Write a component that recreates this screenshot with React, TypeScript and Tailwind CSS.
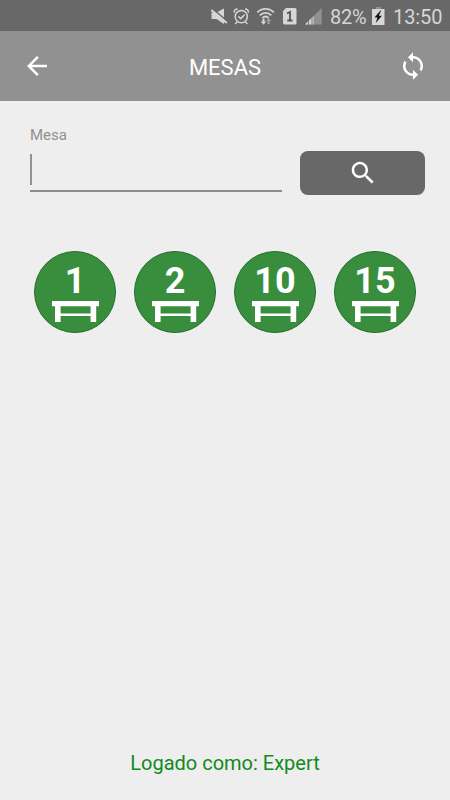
import { useState } from "react";

const TABLES = [1, 2, 10, 15];

function StatusBar() {
  return (
    <div className="flex h-[31px] items-center bg-[#686868] pl-[210px] text-[#d6d6d6]">
      <svg width="120" height="31" viewBox="210 0 120 31" className="shrink-0" fill="none">
        {/* muted speaker */}
        <path d="M211.5 12.5h5L224 8.500v15.500l-7.500-5h-5z" fill="#d6d6d6" />
        <path d="M212.500 8.700l15 12.700" stroke="#686868" strokeWidth="1.500" />
        <path d="M211.300 10l15.500 13" stroke="#d6d6d6" strokeWidth="2.200" />
        {/* alarm clock */}
        <g stroke="#d6d6d6" strokeWidth="1.5">
          <circle cx="241.3" cy="16.6" r="6.1" />
          <path d="M238.3 16.3l2.4 2.3 3.9-3.9" />
          <path d="M234.3 12.6c-.4-2.2 1-3.6 3.2-3.6M245.1 9c2.2 0 3.6 1.4 3.2 3.6M237 22l-1.7 2M245.6 22l1.7 2" />
        </g>
        {/* wifi */}
        <g stroke="#d6d6d6" strokeWidth="1.8">
          <path d="M257.3 12.4c4.6-4.8 11.9-4.8 16.5 0" />
          <path d="M259.8 15.3c3.3-3.3 8.2-3.3 11.5 0" />
          <path d="M262.4 17.9c1.9-1.7 4.4-1.7 6.3 0" />
        </g>
        <path d="M262.500 18.500h2v3h1.700l-2.700 3.200-2.700-3.200h1.700z" fill="#d6d6d6" />
        <path d="M267.600 24h2v-3.200h1.500l-2.500-3.200-2.500 3.200h1.500z" fill="#a3a3a3" />
        {/* sim card */}
        <path d="M286 8h9a1.500 1.500 0 0 1 1.500 1.500v13.500a1.500 1.500 0 0 1-1.500 1.500h-10.500a1.500 1.500 0 0 1-1.500-1.500V11z" fill="#d6d6d6" />
        <path d="M287 13.500l3-1.500v9M287.300 20.500h5.200" stroke="#555" strokeWidth="1.800" />
        {/* signal */}
        <path d="M305 24.500L321.700 8v16.500z" fill="#919191" />
        <path d="M305 24.500l8.500-8.400v8.400z" fill="#d6d6d6" />
        <path d="M308.500 18v7M312 15v10" stroke="#686868" strokeWidth=".8" />
      </svg>
      <span className="w-[41px] pt-[3px] text-[20px] leading-[28px] tracking-[-0.3px]">82%</span>
      <svg width="14" height="31" viewBox="371 0 14 31" className="shrink-0">
        <path d="M372 9h12.500v16H372z" fill="#d6d6d6" />
        <path d="M376 7h5v2h-5z" fill="#919191" />
        <path d="M380.500 10.500l-6 7h3l-1.800 5.500 6.200-7.200h-3.100l2.300-5.300z" fill="#111" />
      </svg>
      <span className="ml-2 pt-[3px] text-[20px] leading-[28px] tracking-[-0.100px]">13:50</span>
    </div>
  );
}

function Header() {
  return (
    <header className="flex h-[70px] items-center justify-between bg-[#919191] px-[22px] text-white">
      <button type="button" aria-label="Voltar">
        <svg width="30" height="30" viewBox="0 0 24 24" fill="currentColor">
          <path d="M20 11H7.830l5.590-5.590L12 4l-8 8 8 8 1.410-1.410L7.830 13H20v-2z" />
        </svg>
      </button>
      <h1 className="pt-1 text-[22px] leading-[30px]">MESAS</h1>
      <button type="button" aria-label="Atualizar">
        <svg width="30" height="30" viewBox="0 0 24 24" fill="currentColor">
          <path d="M12 4V1L8 5l4 4V6c3.310 0 6 2.690 6 6 0 1.010-.25 1.970-.7 2.800l1.460 1.460C19.540 15.030 20 13.570 20 12c0-4.420-3.580-8-8-8zm0 14c-3.310 0-6-2.690-6-6 0-1.010.25-1.970.7-2.800L5.240 7.740C4.460 8.970 4 10.430 4 12c0 4.420 3.580 8 8 8v3l4-4-4-4v3z" />
        </svg>
      </button>
    </header>
  );
}

function TableButton({ number }: { number: number }) {
  return (
    <button
      type="button"
      className="flex size-[82px] flex-col items-center rounded-full border border-[#23702a] bg-[#388e3c] text-white"
    >
      <span className="mt-[9px] text-[36px] leading-[41px] font-bold">{number}</span>
      <svg width="47" height="21" viewBox="0 0 47 21" fill="currentColor" className="-mt-px">
        <path d="M0 0h47v5.300h-2.800V21h-5.600v-6H8.600v6H3V5.300H0zM8.600 5.300v7.300h30V5.300z" fillRule="evenodd" />
      </svg>
    </button>
  );
}

export default function App() {
  const [table, setTable] = useState("");

  return (
    <div className="flex h-[800px] w-[450px] flex-col bg-[#eeeeee] font-['Roboto',sans-serif]">
      <StatusBar />
      <Header />
      <main className="flex flex-1 flex-col">
        <div className="flex gap-[18px] pt-6 pr-[25px] pl-[30px]">
          <label className="flex w-[252px] flex-col text-[15px] leading-5 text-[#919191]">
            Mesa
            <span className="mt-[9px] flex h-[38px] border-b-2 border-[#8c8c8c]">
              <span className="h-[31px] w-[2px] bg-[#919191]" />
              <input
                className="w-full bg-transparent text-[20px] outline-none"
                value={table}
                onChange={(e) => setTable(e.target.value)}
              />
            </span>
          </label>
          <button
            type="button"
            aria-label="Buscar"
            className="mt-[26px] flex h-11 w-[125px] items-center justify-center rounded-[8px] bg-[#686868] text-white"
          >
            <svg width="30" height="30" viewBox="0 0 24 24" fill="currentColor">
              <path d="M15.500 14h-.79l-.28-.27C15.410 12.590 16 11.110 16 9.500 16 5.910 13.090 3 9.500 3S3 5.910 3 9.500 5.910 16 9.500 16c1.610 0 3.090-.59 4.230-1.570l.27.28v.79l5 4.990L20.490 19l-4.990-5zm-6 0C7.010 14 5 11.990 5 9.500S7.010 5 9.500 5 14 7.010 14 9.500 11.990 14 9.500 14z" />
            </svg>
          </button>
        </div>
        <div className="mt-14 flex gap-[18px] pl-[34px]">
          {TABLES.map((n) => (
            <TableButton key={n} number={n} />
          ))}
        </div>
      </main>
      <footer className="pb-[25px] text-center text-[20px] leading-6 text-[#128a1c]">
        Logado como: Expert
      </footer>
    </div>
  );
}
